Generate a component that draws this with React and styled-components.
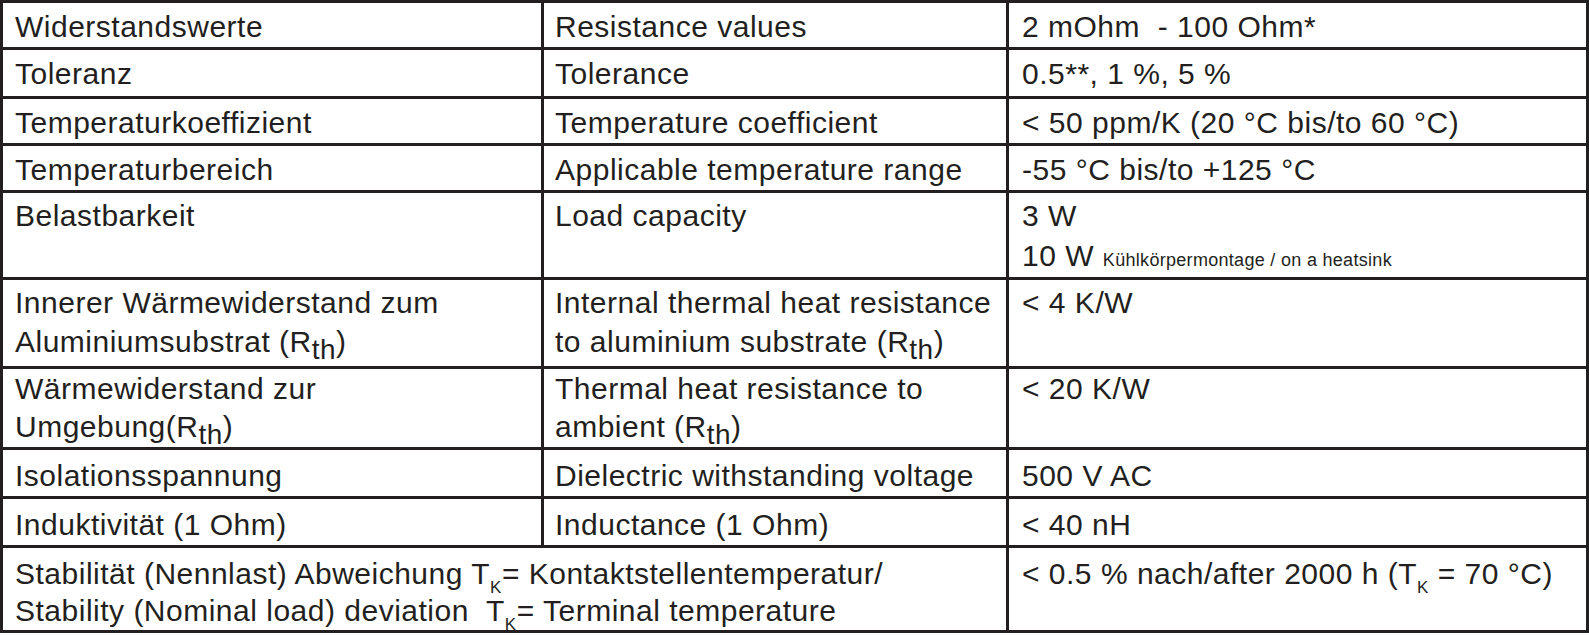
import React from "react";
import styled, { createGlobalStyle } from "styled-components";

const GlobalStyle = createGlobalStyle`
  html, body {
    margin: 0;
    padding: 0;
    background: #fff;
  }
  body {
    font-family: "Liberation Sans", Arial, Helvetica, sans-serif;
    color: #231f20;
  }
`;

const Sheet = styled.div`
  display: grid;
  grid-template-columns: 538px 462px 577px;
  gap: 3px;
  padding: 3px 4px 3px 3px;
  width: max-content;
  background: #231f20;
`;

const Cell = styled.div`
  box-sizing: border-box;
  height: ${(p) => p.$h}px;
  padding: ${(p) => p.$pt}px 4px 0 ${(p) => p.$pl}px;
  grid-column: ${(p) => (p.$span ? `span ${p.$span}` : "auto")};
  background: #fff;
  font-size: 30px;
  letter-spacing: 0.5px;
  line-height: ${(p) => p.$lh}px;
  white-space: nowrap;
`;

const Line = styled.div``;

// (R th) style subscript, nearly full size
const Th = styled.span`
  font-size: 28px;
  line-height: 0;
  vertical-align: -7px;
`;

// small T_K index
const K = styled.span`
  font-size: 17px;
  line-height: 0;
  vertical-align: -9px;
`;

const Note = styled.span`
  font-size: 18px;
  letter-spacing: 0.3px;
`;

const pads = [12, 11, 13];

const rows = [
  {
    h: 44,
    pt: 5,
    cells: ["Widerstandswerte", "Resistance values", "2 mOhm\u00a0 - 100 Ohm*"],
  },
  { h: 46, pt: 5, cells: ["Toleranz", "Tolerance", "0.5**, 1 %, 5 %"] },
  {
    h: 44,
    pt: 5,
    cells: [
      "Temperaturkoeffizient",
      "Temperature coefficient",
      "< 50 ppm/K (20 °C bis/to 60 °C)",
    ],
  },
  {
    h: 44,
    pt: 5,
    cells: [
      "Temperaturbereich",
      "Applicable temperature range",
      "-55 °C bis/to +125 °C",
    ],
  },
  {
    h: 84,
    pt: 3,
    lh: 40,
    cells: [
      "Belastbarkeit",
      "Load capacity",
      <>
        <Line>3 W</Line>
        <Line>
          10 W <Note>Kühlkörpermontage / on a heatsink</Note>
        </Line>
      </>,
    ],
  },
  {
    h: 86,
    pt: 3,
    lh: 39,
    cells: [
      <>
        <Line>Innerer Wärmewiderstand zum</Line>
        <Line>
          Aluminiumsubstrat (R<Th>th</Th>)
        </Line>
      </>,
      <>
        <Line>Internal thermal heat resistance</Line>
        <Line>
          to aluminium substrate (R<Th>th</Th>)
        </Line>
      </>,
      "< 4 K/W",
    ],
  },
  {
    h: 78,
    pt: 1,
    cells: [
      <>
        <Line>Wärmewiderstand zur</Line>
        <Line>
          Umgebung(R<Th>th</Th>)
        </Line>
      </>,
      <>
        <Line>Thermal heat resistance to</Line>
        <Line>
          ambient (R<Th>th</Th>)
        </Line>
      </>,
      "< 20 K/W",
    ],
  },
  {
    h: 46,
    pt: 7,
    cells: [
      "Isolationsspannung",
      "Dielectric withstanding voltage",
      "500 V AC",
    ],
  },
  {
    h: 46,
    pt: 7,
    cells: ["Induktivität (1 Ohm)", "Inductance (1 Ohm)", "< 40 nH"],
  },
];

export default function App() {
  return (
    <>
      <GlobalStyle />
      <Sheet>
        {rows.map((row, r) =>
          row.cells.map((c, i) => (
            <Cell
              key={`${r}-${i}`}
              $h={row.h}
              $pt={row.pt}
              $lh={row.lh || 38}
              $pl={pads[i]}
            >
              {c}
            </Cell>
          ))
        )}
        <Cell $h={82} $pt={7} $lh={37} $pl={12} $span={2}>
          <Line>
            Stabilität (Nennlast) Abweichung T<K>K</K>= Kontaktstellentemperatur/
          </Line>
          <Line>
            Stability (Nominal load) deviation&nbsp; T<K>K</K>= Terminal temperature
          </Line>
        </Cell>
        <Cell $h={82} $pt={7} $lh={37} $pl={13}>
          &lt; 0.5 % nach/after 2000 h (T<K>K</K> = 70 °C)
        </Cell>
      </Sheet>
    </>
  );
}
